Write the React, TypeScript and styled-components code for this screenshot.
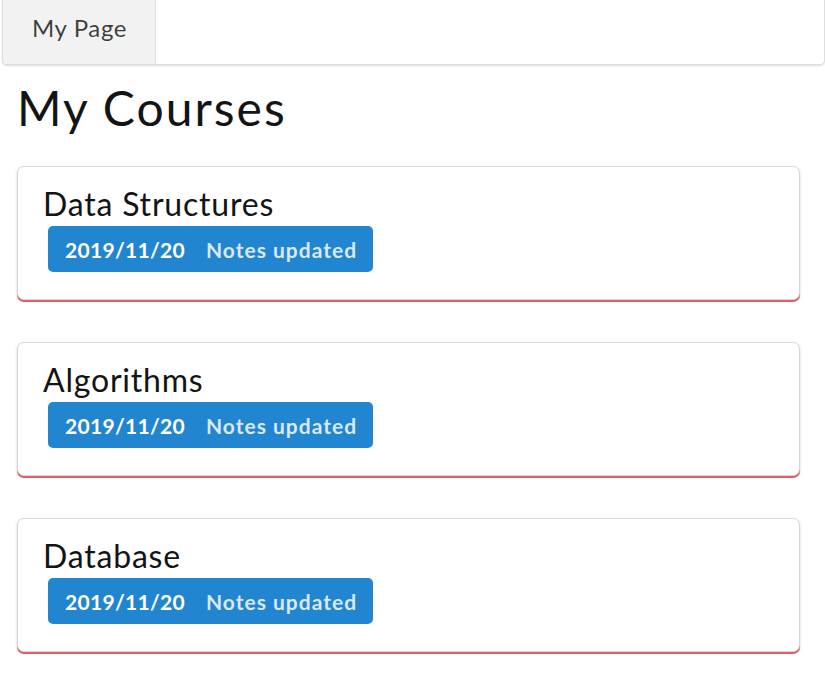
import React from "react";
import styled, { createGlobalStyle } from "styled-components";

const GlobalStyle = createGlobalStyle`
  html, body {
    margin: 0;
    padding: 0;
    background: #ffffff;
    font-family: Lato, "Open Sans", "Liberation Sans", sans-serif;
    color: rgba(0, 0, 0, 0.87);
  }
  * { box-sizing: border-box; }
`;

const Page = styled.div`
  display: flex;
  flex-direction: column;
  padding-bottom: 20px;
`;

const Menu = styled.nav`
  display: flex;
  height: 65px;
  margin-left: 2px;
  border: 1px solid rgba(34, 36, 38, 0.15);
  border-top: none;
  border-radius: 0 0 5px 5px;
  box-shadow: 0 1px 2px 0 rgba(34, 36, 38, 0.15);
  background: #ffffff;
  overflow: hidden;
`;

const MenuItem = styled.div<{ $active?: boolean }>`
  display: flex;
  align-items: center;
  padding: 0 28px 10px 29px;
  font-size: 24px;
  letter-spacing: 0.6px;
  color: rgba(0, 0, 0, 0.75);
  background: ${(p) => (p.$active ? "#f2f2f2" : "transparent")};
  border-right: 1px solid rgba(34, 36, 38, 0.1);
`;

const Content = styled.main`
  display: flex;
  flex-direction: column;
  margin: 0 25px 0 17px;
`;

const Title = styled.h1`
  margin: 13px 0 29px 0;
  font-size: 48px;
  line-height: 59px;
  font-weight: 400;
  letter-spacing: 2px;
  color: #141414;
`;

const CardList = styled.div`
  display: flex;
  flex-direction: column;
  gap: 42px;
`;

const Card = styled.section`
  display: flex;
  flex-direction: column;
  align-items: flex-start;
  padding: 17px 24px 27px 25px;
  background: #ffffff;
  border: 1px solid #d8d8d9;
  border-radius: 7px;
  box-shadow: 0 2px 0 0 #e06060, 0 1px 3px 0 #d4d4d5;
`;

const CardHeader = styled.h2`
  margin: 0;
  font-size: 32px;
  line-height: 40px;
  font-weight: 400;
  letter-spacing: 0.8px;
  color: #141414;
`;

const Badge = styled.div`
  display: inline-flex;
  align-items: center;
  height: 46px;
  margin: 2px 0 0 5px;
  padding: 0 16px 0 17px;
  background: #2185d0;
  border-radius: 5px;
  color: #ffffff;
  font-size: 21px;
  font-weight: 700;
  letter-spacing: 0.3px;
`;

const Detail = styled.span`
  margin-left: 21px;
  letter-spacing: 1px;
  opacity: 0.82;
`;

const courses = ["Data Structures", "Algorithms", "Database"];

export default function App() {
  return (
    <Page>
      <GlobalStyle />
      <Menu>
        <MenuItem $active>My Page</MenuItem>
      </Menu>
      <Content>
        <Title>My Courses</Title>
        <CardList>
          {courses.map((c) => (
            <Card key={c}>
              <CardHeader>{c}</CardHeader>
              <Badge>
                2019/11/20
                <Detail>Notes updated</Detail>
              </Badge>
            </Card>
          ))}
        </CardList>
      </Content>
    </Page>
  );
}
